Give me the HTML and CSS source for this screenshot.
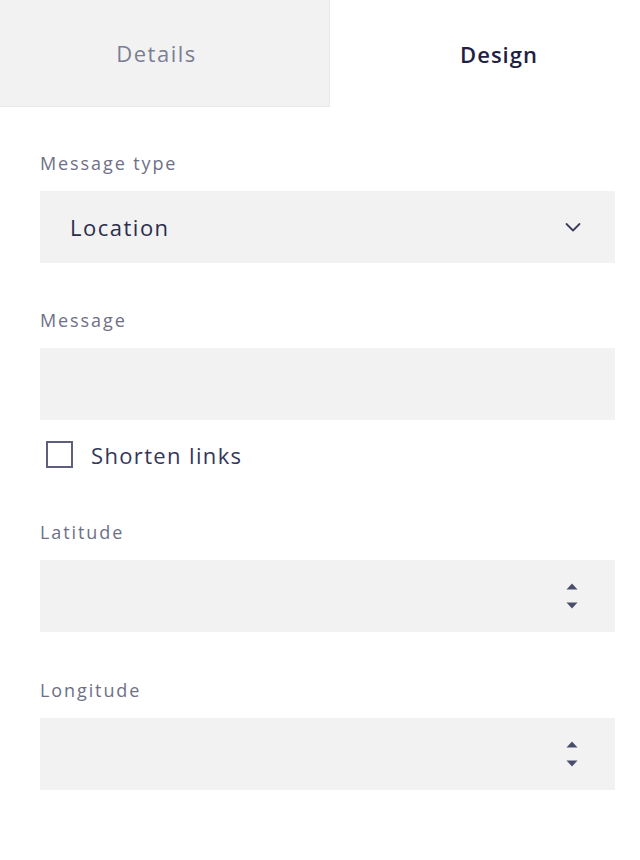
FILE: index.html
```html
<!DOCTYPE html>
<html>
<head>
<meta charset="utf-8">
<link rel="stylesheet" href="styles.css">
</head>
<body>
<div class="tabs">
  <div class="tab tab-inactive">Details</div>
  <div class="tab tab-active">Design</div>
</div>
<form class="form">
  <div class="field field-type">
    <label class="label">Message type</label>
    <div class="box select">
      <span class="value">Location</span>
      <svg class="chevron" width="16" height="10" viewBox="0 0 16 10"><path d="M1.5 2l6.5 6.5 6.5-6.5" fill="none" stroke="#3b3d5c" stroke-width="1.8" stroke-linecap="round" stroke-linejoin="round"/></svg>
    </div>
  </div>
  <div class="field field-msg">
    <label class="label">Message</label>
    <div class="box"></div>
  </div>
  <div class="check-row">
    <span class="checkbox"></span>
    <span class="check-text">Shorten links</span>
  </div>
  <div class="field field-lat">
    <label class="label">Latitude</label>
    <div class="box number">
      <svg class="spin" width="12" height="30" viewBox="0 0 12 30"><path d="M0.5 8.5h11L6 2.5z" fill="#4b4d6c"/><path d="M0.5 21.5h11L6 27.5z" fill="#4b4d6c"/></svg>
    </div>
  </div>
  <div class="field field-lon">
    <label class="label">Longitude</label>
    <div class="box number">
      <svg class="spin" width="12" height="30" viewBox="0 0 12 30"><path d="M0.5 8.5h11L6 2.5z" fill="#4b4d6c"/><path d="M0.5 21.5h11L6 27.5z" fill="#4b4d6c"/></svg>
    </div>
  </div>
</form>
</body>
</html>
```
FILE: styles.css
```css
* { box-sizing: border-box; }
body {
  margin: 0;
  background: #fff;
  font-family: "Open Sans", "Liberation Sans", sans-serif;
  color: #2b2d4d;
}
.tabs {
  display: grid;
  grid-template-columns: 330px 1fr;
  height: 107px;
}
.tab {
  display: flex;
  align-items: center;
  justify-content: center;
  font-size: 22px;
  letter-spacing: 1.5px;
}
.tab-inactive {
  background: #f2f2f2;
  color: #7b7d94;
  border-right: 1px solid #e9e9e9;
  border-bottom: 1px solid #e9e9e9;
  padding-right: 16px;
}
.tab-active {
  color: #1f2142;
  font-weight: 600;
  letter-spacing: 1px;
  padding-left: 28px;
}
.form {
  padding: 0 25px 0 40px;
}
.label {
  display: block;
  font-size: 18px;
  line-height: 24px;
  letter-spacing: 1.9px;
  color: #6e7088;
  margin-bottom: 16px;
}
.field-type { margin-top: 44px; }
.field-msg { margin-top: 45px; }
.field-lat { margin-top: 52px; }
.field-lon { margin-top: 46px; }
.box {
  height: 72px;
  background: #f2f2f2;
  display: flex;
  align-items: center;
  padding: 0 34px 0 30px;
}
.select .value {
  flex: 1;
  font-size: 22px;
  letter-spacing: 1.5px;
  color: #2b2d4d;
}
.number { justify-content: flex-end; padding-right: 37px; }
.check-row {
  display: flex;
  align-items: center;
  margin-top: 21px;
  height: 27px;
}
.checkbox {
  width: 27px;
  height: 27px;
  border: 2px solid #5d5f7c;
  margin-left: 6px;
  margin-right: 18px;
}
.check-text {
  font-size: 22px;
  letter-spacing: 1.35px;
  color: #35375a;
}
```
